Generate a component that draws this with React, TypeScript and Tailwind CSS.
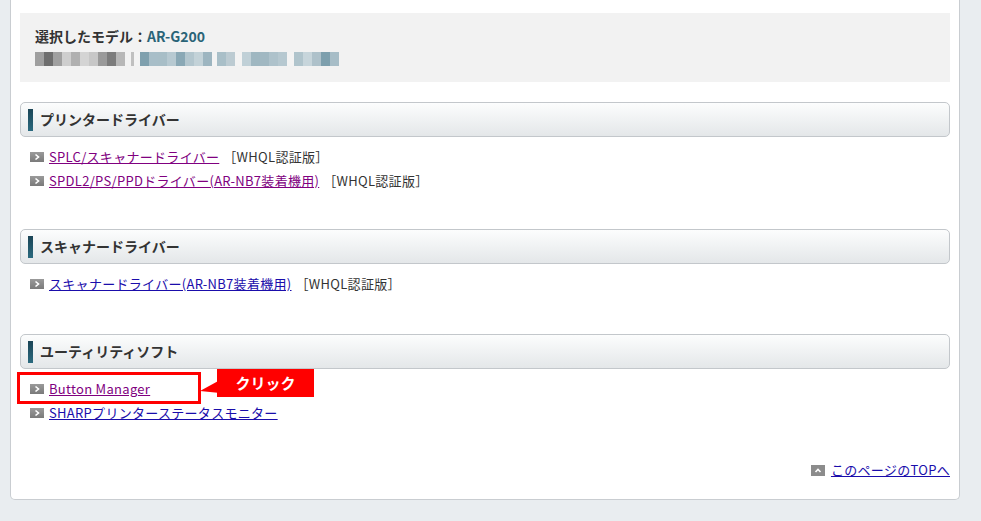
import React from 'react';

const FONT = "font-['Noto_Sans_CJK_JP','Noto_Sans',sans-serif]";

// mosaic blocks standing in for the blurred model name line
const MOSAIC: [number, string][] = [
  [9, '#8a8a8a'], [9, '#6e6e6e'], [9, '#a0a0a0'], [9, '#c4c4c4'], [9, '#b0b0b0'], [9, '#d4d4d4'],
  [9, '#bcbcbc'], [9, '#9a9a9a'], [9, '#7c7c7c'], [9, '#a8a8a8'], [6, '#f2f2f2'], [3, '#c0c0c0'],
  [6, '#f2f2f2'], [9, '#7fa0ae'], [9, '#a8bec8'], [9, '#95b0bc'], [9, '#b7c9d1'], [9, '#8aa8b5'],
  [9, '#a2bac4'], [9, '#c3d2d8'], [9, '#9db5c0'], [5, '#f2f2f2'], [9, '#a9bfc8'], [9, '#bccbd2'],
  [7, '#f2f2f2'], [9, '#c0d0d7'], [9, '#9fb7c1'], [9, '#8ca9b5'], [9, '#aec2cb'], [9, '#b6c8d0'],
  [7, '#f2f2f2'], [9, '#b0c4cc'], [9, '#c7d5db'], [9, '#9cb4bf'], [9, '#7d9fad'], [9, '#a7bdc7'],
];

const Arrow = () => (
  <svg width="14" height="10" viewBox="0 0 14 10" className="shrink-0">
    <defs>
      <linearGradient id="ag" x1="0" y1="0" x2="0" y2="1">
        <stop offset="0" stopColor="#9a9a9a" />
        <stop offset="1" stopColor="#7a7a7a" />
      </linearGradient>
    </defs>
    <rect width="14" height="10" fill="url(#ag)" />
    <path d="M5.5 2.5 L8.5 5 L5.5 7.5" stroke="#fff" strokeWidth="1.6" fill="none" />
  </svg>
);

const UpIcon = () => (
  <svg width="14" height="11" viewBox="0 0 14 11" className="shrink-0">
    <rect width="14" height="11" fill="#8c8c8c" />
    <path d="M4.5 7 L7 4.5 L9.5 7" stroke="#fff" strokeWidth="1.6" fill="none" />
  </svg>
);

const Header = ({ title }: { title: string }) => (
  <div className="h-[35px] flex items-center rounded-[5px] border border-[#c3c7cb] bg-gradient-to-b from-[#fcfdfd] to-[#e4e7e9] pl-[7px]">
    <div className="w-[5px] h-[22px] bg-gradient-to-b from-[#1b4556] to-[#2b6a7f]" />
    <span className="ml-[7px] text-[14px] font-bold text-[#333]">{title}</span>
  </div>
);

type Item = { label: string; visited?: boolean; whql?: boolean; callout?: boolean };

const Row = ({ item }: { item: Item }) => (
  <div className="relative h-[24px] flex items-center pl-[10px] text-[13px] tracking-[0.3px]">
    <Arrow />
    <a
      href="#"
      className={`ml-[5px] underline ${item.visited ? 'text-[#800080]' : 'text-[#1a0dab]'}`}
    >
      {item.label}
    </a>
    {item.whql && <span className="ml-[4px] text-[#333]">［WHQL認証版］</span>}
    {item.callout && (
      <>
        <div className="absolute left-[-3px] top-[-5px] w-[184px] h-[32px] border-[3px] border-[#f00]" />
        <svg className="absolute left-[180px] top-[-8px]" width="20" height="28" viewBox="0 0 20 28">
          <polygon points="20,11 0,22 20,24" fill="#f00" />
        </svg>
        <div className="absolute left-[197px] top-[-8px] w-[97px] h-[28px] bg-[#f00] flex items-center justify-center text-white font-bold text-[15px] tracking-normal">
          クリック
        </div>
      </>
    )}
  </div>
);

const App: React.FC = () => {
  const sections: { title: string; items: Item[]; mt: string }[] = [
    {
      title: 'プリンタードライバー',
      mt: 'mt-[20px]',
      items: [
        { label: 'SPLC/スキャナードライバー', visited: true, whql: true },
        { label: 'SPDL2/PS/PPDドライバー(AR-NB7装着機用)', visited: true, whql: true },
      ],
    },
    {
      title: 'スキャナードライバー',
      mt: 'mt-[36px]',
      items: [{ label: 'スキャナードライバー(AR-NB7装着機用)', whql: true }],
    },
    {
      title: 'ユーティリティソフト',
      mt: 'mt-[38px]',
      items: [
        { label: 'Button Manager', visited: true, callout: true },
        { label: 'SHARPプリンターステータスモニター' },
      ],
    },
  ];

  return (
    <div className={`${FONT} w-[981px] h-[521px] overflow-hidden bg-[#e9edf0]`}>
      <div className="ml-[10px] w-[950px] h-[500px] bg-white border-x border-b border-[#c9cdd1] rounded-b-[5px] px-[9px]">
        <div className="h-[13px]" />
        <div className="h-[69px] bg-[#f2f2f2] pl-[15px] pt-[13px]">
          <div className="text-[14px] font-bold text-[#333] leading-[20px]">
            選択したモデル：<span className="text-[#2a6478]">AR-G200</span>
          </div>
          <div className="flex mt-[6px] h-[14px]">
            {MOSAIC.map(([w, c], i) => (
              <div key={i} style={{ width: w, backgroundColor: c, opacity: i % 3 === 0 ? 0.8 : 1 }} className="h-full" />
            ))}
          </div>
        </div>

        {sections.map(s => (
          <div key={s.title} className={s.mt}>
            <Header title={s.title} />
            <div className="mt-[8px]">
              {s.items.map(it => (
                <Row key={it.label} item={it} />
              ))}
            </div>
          </div>
        ))}

        <div className="mt-[33px] h-[24px] flex items-center justify-end text-[13px] tracking-[0.3px]">
          <UpIcon />
          <a href="#" className="ml-[6px] underline text-[#1a0dab]">このページのTOPへ</a>
        </div>
      </div>
    </div>
  );
};

export default App;
